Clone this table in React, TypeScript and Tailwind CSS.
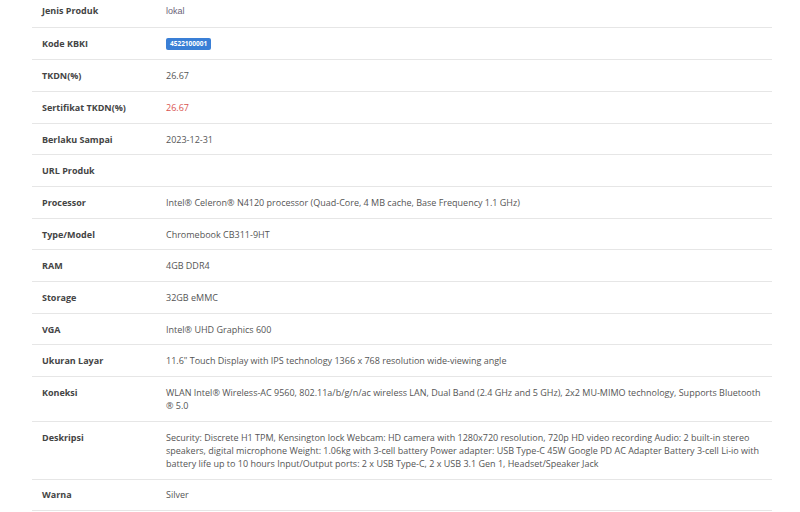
import React from 'react';

type Row = { label: string; value: React.ReactNode };

const rows: Row[] = [
  { label: 'Jenis Produk', value: <span className="text-[#6b5f78] font-['Liberation_Sans',sans-serif]">lokal</span> },
  {
    label: 'Kode KBKI',
    value: (
      <span className="inline-block bg-[#3a7fd6] text-white font-bold text-[6.5px] leading-[12px] px-[4px] rounded-[2px] align-middle">
        4522100001
      </span>
    ),
  },
  { label: 'TKDN(%)', value: '26.67' },
  { label: 'Sertifikat TKDN(%)', value: <span className="text-[#d9534f]">26.67</span> },
  { label: 'Berlaku Sampai', value: '2023-12-31' },
  { label: 'URL Produk', value: '' },
  { label: 'Processor', value: 'Intel® Celeron® N4120 processor (Quad-Core, 4 MB cache, Base Frequency 1.1 GHz)' },
  { label: 'Type/Model', value: 'Chromebook CB311-9HT' },
  { label: 'RAM', value: '4GB DDR4' },
  { label: 'Storage', value: '32GB eMMC' },
  { label: 'VGA', value: 'Intel® UHD Graphics 600' },
  { label: 'Ukuran Layar', value: '11.6" Touch Display with IPS technology 1366 x 768 resolution wide-viewing angle' },
  {
    label: 'Koneksi',
    value:
      'WLAN Intel® Wireless-AC 9560, 802.11a/b/g/n/ac wireless LAN, Dual Band (2.4 GHz and 5 GHz), 2x2 MU-MIMO technology, Supports Bluetooth \u00AE\uFE0E 5.0',
  },
  {
    label: 'Deskripsi',
    value:
      'Security: Discrete H1 TPM, Kensington lock Webcam: HD camera with 1280x720 resolution, 720p HD video recording Audio: 2 built-in stereo speakers, digital microphone Weight: 1.06kg with 3-cell battery Power adapter: USB Type-C 45W Google PD AC Adapter Battery 3-cell Li-io with battery life up to 10 hours Input/Output ports: 2 x USB Type-C, 2 x USB 3.1 Gen 1, Headset/Speaker Jack',
  },
  { label: 'Warna', value: 'Silver' },
];

const App = () => {
  return (
    <div className="w-[800px] h-[512px] overflow-hidden bg-white font-['Open_Sans',sans-serif] text-[9px] leading-[13px]">
      <div className="ml-[32px] w-[740px] mt-[-4.7px]">
        {rows.map((r) => (
          <div key={r.label} className="flex pl-[10px] pr-[8px] py-[8.85px] border-b border-[#e6e6e6]">
            <div className="w-[124px] shrink-0 font-bold text-[#444]">{r.label}</div>
            <div className="flex-1 text-[#555] min-h-[13px]">{r.value}</div>
          </div>
        ))}
      </div>
    </div>
  );
};

export default App;
